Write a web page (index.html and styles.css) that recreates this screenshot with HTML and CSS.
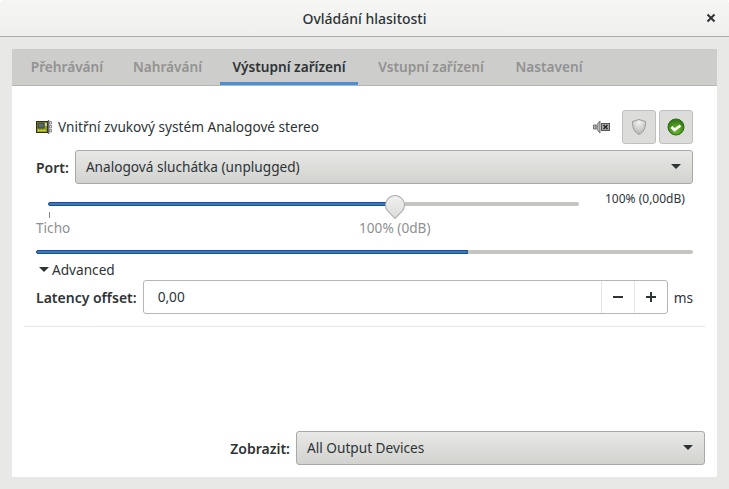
FILE: index.html
```html
<!DOCTYPE html>
<html lang="en">
<head>
    <meta charset="UTF-8">
    <title>Ovládání hlasitosti</title>
    <link rel="stylesheet" href="styles.css">
</head>
<body>
    <div class="window">
        <header class="titlebar">
            <span class="title">Ovládání hlasitosti</span>
            <svg class="close" width="10" height="10" viewBox="0 0 10 10"><path d="M1.500 1.500l7 7M8.500 1.500l-7 7" stroke="#2e3436" stroke-width="2"/></svg>
        </header>

        <div class="content">
            <div class="notebook">
                <div class="tabs">
                    <div class="tab">Přehrávání</div>
                    <div class="tab">Nahrávání</div>
                    <div class="tab active">Výstupní zařízení</div>
                    <div class="tab">Vstupní zařízení</div>
                    <div class="tab">Nastavení</div>
                </div>

                <div class="pane">
                    <div class="device">
                        <div class="device-head">
                            <svg class="card-icon" width="16" height="16" viewBox="0 0 16 16">
                                <rect x="0.500" y="2.500" width="11" height="11" fill="#8c9a1e" stroke="#2e3010"/>
                                <rect x="2" y="4" width="6" height="5" fill="#5d6668" stroke="#2b3a3a" stroke-width="0.8"/>
                                <rect x="9" y="4" width="2" height="3" fill="#c8c8b8"/>
                                <path d="M2 11.500h8" stroke="#e8e040" stroke-width="1.600" stroke-dasharray="1 0.500"/>
                                <path d="M12.500 1v14" stroke="#666" stroke-width="1.400"/>
                                <path d="M13.500 2.500h2v2.500h-2zM13.500 6.500h2v2.500h-2zM13.500 10.500h2v2.500h-2z" fill="#e4e4e4" stroke="#666" stroke-width="0.7"/>
                            </svg>
                            <span class="device-name">Vnitřní zvukový systém Analogové stereo</span>
                            <svg class="mute-icon" width="18" height="16" viewBox="0 0 18 16">
                                <path d="M0.500 6h2.500v4H0.500zM4 5.500l3-3.500v12l-3-3.500z" fill="#b8b8b8" stroke="#555" stroke-width="0.8"/>
                                <rect x="8.500" y="4.500" width="8" height="7" fill="#a8a8a8" stroke="#555"/>
                                <path d="M10.500 6l4 4M14.500 6l-4 4" stroke="#222" stroke-width="1.400"/>
                            </svg>
                            <button class="toggle">
                                <svg width="16" height="18" viewBox="0 0 16 18">
                                    <defs>
                                        <radialGradient id="shieldFill" cx="0.5" cy="0.2" r="0.8">
                                            <stop offset="0" stop-color="#f2f2f0"/>
                                            <stop offset="1" stop-color="#b4b4b2"/>
                                        </radialGradient>
                                    </defs>
                                    <path d="M8 1.500l6.500 2c.2 6-1.600 10.500-6.500 13C3.100 14 1.300 9.500 1.500 3.500z" fill="url(#shieldFill)" stroke="#9a9a98"/>
                                </svg>
                            </button>
                            <button class="toggle">
                                <svg width="18" height="18" viewBox="0 0 18 18">
                                    <defs>
                                        <radialGradient id="okFill" cx="0.5" cy="0.7" r="0.7">
                                            <stop offset="0" stop-color="#6fbf2e"/>
                                            <stop offset="1" stop-color="#2d6f14"/>
                                        </radialGradient>
                                    </defs>
                                    <circle cx="9" cy="9" r="8" fill="url(#okFill)" stroke="#2d6a12"/>
                                    <path d="M4.500 9l3 3 6-4.500" fill="none" stroke="#fff" stroke-width="2.800"/>
                                </svg>
                            </button>
                        </div>

                        <div class="port-row">
                            <span class="label">Port:</span>
                            <div class="combo">
                                <span>Analogová sluchátka (unplugged)</span>
                                <span class="arrow"></span>
                            </div>
                        </div>

                        <div class="volume-row">
                            <div class="slider">
                                <div class="trough"><div class="fill fill-volume"></div></div>
                                <div class="thumb"></div>
                                <div class="mark"></div>
                                <span class="mark-label label-silent">Ticho</span>
                                <span class="mark-label label-full">100% (0dB)</span>
                            </div>
                            <span class="volume-value">100% (0,00dB)</span>
                        </div>

                        <div class="trough level"><div class="fill fill-level"></div></div>

                        <div class="expander"><span class="arrow"></span>Advanced</div>

                        <div class="latency-row">
                            <span class="label">Latency offset:</span>
                            <div class="spin">
                                <span class="spin-value">0,00</span>
                                <span class="spin-btn">
                                    <svg width="10" height="10" viewBox="0 0 10 10"><path d="M0 5h10" stroke="#2e3436" stroke-width="2"/></svg>
                                </span>
                                <span class="spin-btn">
                                    <svg width="10" height="10" viewBox="0 0 10 10"><path d="M0 5h10M5 0v10" stroke="#2e3436" stroke-width="2"/></svg>
                                </span>
                            </div>
                            <span class="unit">ms</span>
                        </div>
                    </div>

                    <div class="footer">
                        <span class="label">Zobrazit:</span>
                        <div class="combo combo-show">
                            <span>All Output Devices</span>
                            <span class="arrow"></span>
                        </div>
                    </div>
                </div>
            </div>
        </div>
    </div>
</body>
</html>
```

FILE: styles.css
```css
* {
    box-sizing: border-box;
}

body {
    margin: 0;
    background-color: white;
    font-family: "Noto Sans", sans-serif;
    font-size: 13.65px;
    color: #2e3436;
}

.window {
    display: flex;
    flex-direction: column;
    height: 489px;
    background-color: #e8e8e7;
    border-radius: 5px 5px 0 0;
}

.titlebar {
    display: flex;
    align-items: center;
    justify-content: center;
    position: relative;
    height: 37px;
    flex: none;
    background: linear-gradient(#f6f6f5, #efefee);
    border-bottom: 1px solid #a9a9a5;
    border-radius: 5px 5px 0 0;
}

.title {
    font-size: 14px;
    font-weight: 500;
}

.close {
    position: absolute;
    right: 13px;
    top: 13px;
}

.content {
    flex: 1;
    display: flex;
    padding: 12px 12px 12px;
}

.notebook {
    flex: 1;
    display: flex;
    flex-direction: column;
    background-color: white;
}

.tabs {
    display: grid;
    grid-template-columns: 96px 89px 138px 130px 90px;
    column-gap: 8px;
    height: 37px;
    padding-left: 7px;
    background-color: #cdcdcb;
    border-bottom: 1px solid #b6b6b3;
}

.tab {
    display: flex;
    align-items: center;
    justify-content: center;
    padding-bottom: 2px;
    font-weight: 600;
    color: #929291;
    height: 36px;
}

.tab.active {
    color: #2e3436;
    box-shadow: inset 0 -3px 0 #4a90d9;
}

.pane {
    flex: 1;
    display: flex;
    flex-direction: column;
    justify-content: space-between;
    padding: 24px 12px 12px;
}

.device {
    padding: 0 12px 12px;
    border-bottom: 1px solid #e6e6e5;
}

.device-head {
    display: flex;
    align-items: center;
    height: 34px;
}

.card-icon {
    margin-right: 6px;
}

.device-name {
    flex: 1;
    padding-bottom: 1px;
}

.mute-icon {
    margin-right: 11px;
}

.toggle {
    display: flex;
    align-items: center;
    justify-content: center;
    width: 34px;
    height: 34px;
    margin-left: 3px;
    padding: 0;
    background-color: #dcdcdb;
    border: 1px solid #c0c0bd;
    border-radius: 3px;
}

.mute-icon + .toggle {
    margin-left: 0;
}

.label {
    font-size: 14px;
    font-weight: 600;
}

.port-row {
    display: flex;
    align-items: center;
    gap: 6px;
    margin-top: 6px;
}

.combo {
    flex: 1;
    display: flex;
    align-items: center;
    justify-content: space-between;
    height: 34px;
    padding: 0 11px 2px 10px;
    background: linear-gradient(#e8e8e6, #d2d2cf);
    border: 1px solid #a9a9a5;
    border-radius: 3px;
}

.arrow {
    width: 0;
    height: 0;
    border-left: 5px solid transparent;
    border-right: 5px solid transparent;
    border-top: 5px solid #2e3436;
}

.volume-row {
    display: flex;
    height: 66px;
}

.slider {
    position: relative;
    width: 531px;
    margin-left: 12px;
}

.trough {
    height: 4px;
    background-color: #c4c4c1;
    border-radius: 2px;
}

.slider > .trough {
    margin-top: 18px;
}

.fill {
    height: 4px;
    background-color: #3b78c0;
    border: 1px solid #1c4f8a;
    border-radius: 2px 0 0 2px;
}

.fill-volume {
    width: 347px;
}

.fill-level {
    width: 432px;
}

.thumb {
    position: absolute;
    left: 337px;
    top: 11px;
    width: 20px;
    height: 20px;
    background: linear-gradient(45deg, #dcdcda, #f4f4f3);
    border: 1px solid #a9a9a5;
    border-radius: 50% 50% 50% 0;
    transform: rotate(-45deg);
}

.mark {
    position: absolute;
    left: 1px;
    top: 28px;
    width: 1px;
    height: 6px;
    background-color: #888;
}

.mark-label {
    position: absolute;
    top: 34px;
    color: #8f9190;
}

.label-silent {
    left: -12px;
}

.label-full {
    left: 311px;
}

.volume-value {
    margin-left: 26px;
    margin-top: 6px;
    font-size: 12px;
}

.expander {
    display: flex;
    align-items: center;
    gap: 3px;
    height: 21px;
    margin-top: 5px;
    padding-left: 3px;
}

.latency-row {
    display: flex;
    align-items: center;
    gap: 6px;
}

.spin {
    flex: 1;
    display: flex;
    align-items: stretch;
    height: 34px;
    border: 1px solid #b6b6b3;
    border-radius: 3px;
}

.spin-value {
    flex: 1;
    align-self: center;
    padding: 0 0 2px 14px;
}

.spin-btn {
    display: flex;
    align-items: center;
    justify-content: center;
    width: 33px;
    border-left: 1px solid #e6e6e5;
}

.footer {
    display: flex;
    align-items: center;
    justify-content: flex-end;
    gap: 6px;
}

.combo-show {
    flex: none;
    width: 409px;
}
```
